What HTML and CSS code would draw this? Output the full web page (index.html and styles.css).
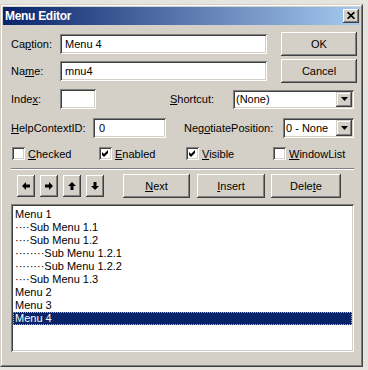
FILE: index.html
```html
<!DOCTYPE html>
<html lang="en">
<head>
    <meta charset="UTF-8">
    <meta name="viewport" content="width=device-width, initial-scale=1.0">
    <title>Menu Editor</title>
    <link rel="stylesheet" href="styles.css">
</head>
<body>
    <div class="window">
        <div class="frame">
            <!-- Title bar -->
            <div class="titlebar">
                <span class="title">Menu Editor</span>
                <span class="close">
                    <svg width="8" height="7" viewBox="0 0 8 7"><path d="M0.6 0.2 L7.4 6.8 M7.4 0.2 L0.6 6.8" stroke="#000" stroke-width="1.7"/></svg>
                </span>
            </div>

            <div class="content">
                <div class="row row-tall">
                    <span class="lbl w49">Ca<u>p</u>tion:</span>
                    <div class="field w207">Menu 4</div>
                    <div class="btn btn-side">OK</div>
                </div>

                <div class="row row-tall gap1">
                    <span class="lbl w49">Na<u>m</u>e:</span>
                    <div class="field w207">mnu4</div>
                    <div class="btn btn-side">Cancel</div>
                </div>

                <div class="row row-tall gap2">
                    <span class="lbl w49">Inde<u>x</u>:</span>
                    <div class="field w36"></div>
                    <span class="lbl w63 shortcut"><u>S</u>hortcut:</span>
                    <div class="combo w121">
                        <span class="combo-text">(None)</span>
                        <span class="combo-btn"><svg width="7" height="4" viewBox="0 0 7 4"><path d="M0 0 H7 L3.5 4 Z" fill="#000"/></svg></span>
                    </div>
                </div>

                <div class="row row-mid gap4">
                    <span class="lbl w82"><u>H</u>elpContextID:</span>
                    <div class="field w73 help">0</div>
                    <span class="lbl w99 negotiate">Neg<u>o</u>tiatePosition:</span>
                    <div class="combo combo-20 w71">
                        <span class="combo-text">0 - None</span>
                        <span class="combo-btn"><svg width="7" height="4" viewBox="0 0 7 4"><path d="M0 0 H7 L3.5 4 Z" fill="#000"/></svg></span>
                    </div>
                </div>

                <div class="row row-checks gap4">
                    <div class="check">
                        <span class="box"></span>
                        <span><u>C</u>hecked</span>
                    </div>
                    <div class="check">
                        <span class="box"><svg width="7" height="7" viewBox="0 0 7 7"><path d="M0 2 L2 4 L6 0 V3 L2 7 L0 5 Z" fill="#000"/></svg></span>
                        <span><u>E</u>nabled</span>
                    </div>
                    <div class="check">
                        <span class="box"><svg width="7" height="7" viewBox="0 0 7 7"><path d="M0 2 L2 4 L6 0 V3 L2 7 L0 5 Z" fill="#000"/></svg></span>
                        <span><u>V</u>isible</span>
                    </div>
                    <div class="check">
                        <span class="box"></span>
                        <span><u>W</u>indowList</span>
                    </div>
                </div>

                <div class="separator"></div>

                <div class="row row-buttons">
                    <div class="btn arrow first">
                        <svg width="8" height="8" viewBox="0 0 8 8"><path d="M0 4 L4 0 V2.5 H8 V5.5 H4 V8 Z" fill="#000"/></svg>
                    </div>
                    <div class="btn arrow">
                        <svg width="8" height="8" viewBox="0 0 8 8"><path d="M8 4 L4 0 V2.5 H0 V5.5 H4 V8 Z" fill="#000"/></svg>
                    </div>
                    <div class="btn arrow">
                        <svg width="8" height="8" viewBox="0 0 8 8"><path d="M4 0 L0 4 H2.5 V8 H5.5 V4 H8 Z" fill="#000"/></svg>
                    </div>
                    <div class="btn arrow">
                        <svg width="8" height="8" viewBox="0 0 8 8"><path d="M4 8 L0 4 H2.5 V0 H5.5 V4 H8 Z" fill="#000"/></svg>
                    </div>
                    <div class="btn btn-next"><u>N</u>ext</div>
                    <div class="btn btn-insert"><u>I</u>nsert</div>
                    <div class="btn btn-delete">Dele<u>t</u>e</div>
                </div>

                <!-- Menu list -->
                <div class="list">
                    <div class="item">Menu 1</div>
                    <div class="item">····Sub Menu 1.1</div>
                    <div class="item">····Sub Menu 1.2</div>
                    <div class="item">········Sub Menu 1.2.1</div>
                    <div class="item">········Sub Menu 1.2.2</div>
                    <div class="item">····Sub Menu 1.3</div>
                    <div class="item">Menu 2</div>
                    <div class="item">Menu 3</div>
                    <div class="item selected">Menu 4</div>
                </div>
            </div>
        </div>
    </div>
</body>
</html>
```

FILE: styles.css
```css
* {
    box-sizing: border-box;
}

body {
    margin: 0;
    background: #e6e4de;
    font-family: "Liberation Sans", Arial, sans-serif;
    font-size: 11px;
    color: #000;
}

.window {
    margin-top: 4px;
    width: 363px;
    height: 363px;
    background: #d4d0c8;
    border: 1px solid;
    border-color: #d4d0c8 #404040 #404040 #d4d0c8;
}

.frame {
    height: 100%;
    padding: 1px;
    border: 1px solid;
    border-color: #fff #808080 #808080 #fff;
    display: flex;
    flex-direction: column;
}

.titlebar {
    height: 18px;
    flex-shrink: 0;
    padding: 0 1px 0 2px;
    background: linear-gradient(to right, #0a246a, #a6caf0);
    display: flex;
    align-items: center;
    justify-content: space-between;
}

.title {
    color: #fff;
    font-weight: bold;
    font-size: 12px;
    letter-spacing: -0.3px;
}

.close {
    width: 16px;
    height: 14px;
    background: #d4d0c8;
    box-shadow: inset -1px -1px #404040, inset 1px 1px #fff, inset -2px -2px #808080;
    display: flex;
    align-items: center;
    justify-content: center;
    padding-bottom: 1px;
}

.content {
    padding: 0 6px 0 8px;
}

.row {
    display: flex;
    align-items: center;
}

.row > * {
    flex-shrink: 0;
}

.row-tall {
    height: 26px;
    margin-top: 6px;
}

.gap1 { margin-top: 1px; }
.gap2 { margin-top: 2px; }
.gap4 { margin-top: 4px; }

.row-mid {
    height: 24px;
}

.row-checks {
    height: 19px;
}

.row-buttons {
    height: 24px;
    margin-top: 4px;
}

.lbl {
    white-space: nowrap;
}

.w36 { width: 36px; }
.w49 { width: 49px; }
.w63 { width: 63px; }
.w71 { width: 71px; }
.w73 { width: 73px; }
.w82 { width: 82px; }
.w99 { width: 99px; }
.w121 { width: 121px; }
.w207 { width: 207px; }

.shortcut { margin-left: 74px; }
.negotiate { margin-left: 18px; }

.field {
    height: 20px;
    background: #fff;
    padding: 0 4px 0 5px;
    line-height: 20px;
    box-shadow: inset 1px 1px #808080, inset -1px -1px #fff, inset 2px 2px #404040, inset -2px -2px #d4d0c8;
}

.field.help {
    padding-left: 6px;
}

.combo {
    height: 19px;
    background: #fff;
    padding: 2px;
    display: flex;
    align-items: center;
    box-shadow: inset 1px 1px #808080, inset -1px -1px #fff, inset 2px 2px #404040, inset -2px -2px #d4d0c8;
}

.combo-20 {
    height: 20px;
}

.combo-text {
    flex: 1;
    padding-left: 1px;
}

.combo-btn {
    width: 16px;
    height: 100%;
    background: #d4d0c8;
    display: flex;
    align-items: center;
    justify-content: center;
    box-shadow: inset -1px -1px #404040, inset 1px 1px #d4d0c8, inset -2px -2px #808080, inset 2px 2px #fff;
}

.btn {
    background: #d4d0c8;
    display: flex;
    align-items: center;
    justify-content: center;
    box-shadow: inset -1px -1px #404040, inset 1px 1px #fff, inset -2px -2px #808080, inset 2px 2px #d4d0c8;
}

.btn-side {
    width: 76px;
    height: 24px;
    margin-left: 14px;
}

.check {
    width: 87px;
    display: flex;
    align-items: center;
}

.check:first-child {
    margin-left: 1px;
}

.box {
    width: 13px;
    height: 13px;
    margin-right: 3px;
    background: #fff;
    display: flex;
    align-items: center;
    justify-content: center;
    box-shadow: inset 1px 1px #808080, inset -1px -1px #fff, inset 2px 2px #404040, inset -2px -2px #d4d0c8;
}

.separator {
    height: 2px;
    margin-top: 5px;
    border-top: 1px solid #808080;
    border-bottom: 1px solid #fff;
}

.arrow {
    width: 18px;
    height: 22px;
    margin-left: 5px;
}

.arrow.first {
    margin-left: 6px;
}

.btn-next {
    width: 67px;
    height: 24px;
    margin-left: 19px;
}

.btn-insert {
    width: 68px;
    height: 24px;
    margin-left: 7px;
}

.btn-delete {
    width: 70px;
    height: 24px;
    margin-left: 6px;
}

.list {
    height: 148px;
    margin-top: 6px;
    padding: 4px 2px 2px;
    background: #fff;
    box-shadow: inset 1px 1px #808080, inset -1px -1px #fff, inset 2px 2px #404040, inset -2px -2px #d4d0c8;
}

.item {
    height: 13px;
    line-height: 13px;
    padding-left: 2px;
    white-space: pre;
}

.item.selected {
    background: #0a246a;
    color: #fff;
    outline: 1px dotted #b8b49a;
    outline-offset: -1px;
}
```
